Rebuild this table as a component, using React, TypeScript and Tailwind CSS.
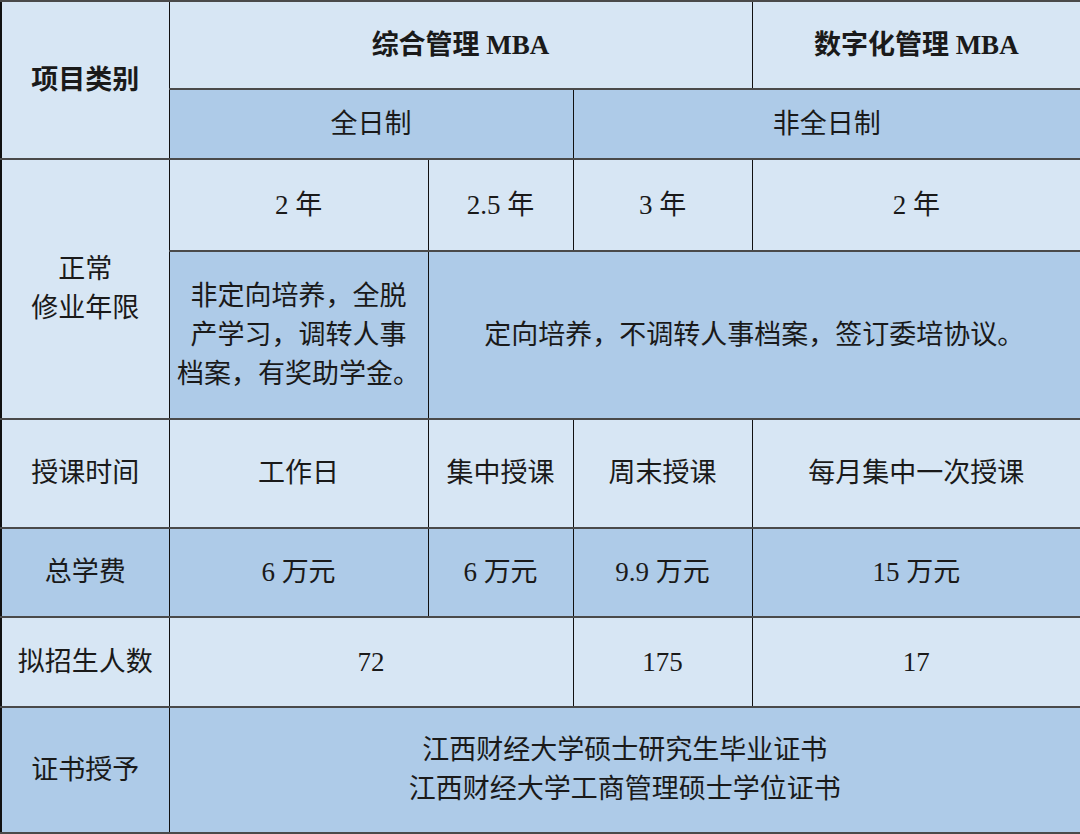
const light = 'bg-[#d7e6f4]';
const dark = 'bg-[#aecbe8]';

function Cell({
  children, bg, colSpan, rowSpan, bold, className = '',
}: {
  children: React.ReactNode; bg: string; colSpan?: number; rowSpan?: number; bold?: boolean; className?: string;
}) {
  return (
    <td
      colSpan={colSpan}
      rowSpan={rowSpan}
      className={`${bg} border-x border-x-[#111] border-y-2 border-y-[#4a4a4a] text-center align-middle p-0 ${bold ? 'font-bold' : ''} ${className}`}
    >
      {children}
    </td>
  );
}

export default function App() {
  return (
    <div
      className="w-[1080px] h-[834px] bg-[#f2f2f2] text-[#1a1a1a] text-[27px] leading-[39px]"
      style={{ fontFamily: '"Liberation Serif", "Noto Sans CJK SC", serif' }}
    >
      <table className="w-[1080px] table-fixed border-collapse border-2 border-[#111]">
        <colgroup>
          <col className="w-[168px]" />
          <col className="w-[259px]" />
          <col className="w-[145px]" />
          <col className="w-[179px]" />
          <col className="w-[329px]" />
        </colgroup>
        <tbody>
          <tr className="h-[88px]">
            <Cell bg={light} rowSpan={2} bold>项目类别</Cell>
            <Cell bg={light} colSpan={3} bold>综合管理 MBA</Cell>
            <Cell bg={light} bold>数字化管理 MBA</Cell>
          </tr>
          <tr className="h-[70px]">
            <Cell bg={dark} colSpan={2}>全日制</Cell>
            <Cell bg={dark} colSpan={2}>非全日制</Cell>
          </tr>
          <tr className="h-[92px]">
            <Cell bg={light} rowSpan={2}>正常<br />修业年限</Cell>
            <Cell bg={light}>2 年</Cell>
            <Cell bg={light}>2.5 年</Cell>
            <Cell bg={light}>3 年</Cell>
            <Cell bg={light}>2 年</Cell>
          </tr>
          <tr className="h-[168px]">
            <Cell bg={dark}>
              非定向培养，全脱<br />产学习，调转人事<br />档案，有奖助学金。
            </Cell>
            <Cell bg={dark} colSpan={3}>定向培养，不调转人事档案，签订委培协议。</Cell>
          </tr>
          <tr className="h-[109px]">
            <Cell bg={light}>授课时间</Cell>
            <Cell bg={light}>工作日</Cell>
            <Cell bg={light}>集中授课</Cell>
            <Cell bg={light}>周末授课</Cell>
            <Cell bg={light}>每月集中一次授课</Cell>
          </tr>
          <tr className="h-[89px]">
            <Cell bg={dark}>总学费</Cell>
            <Cell bg={dark}>6 万元</Cell>
            <Cell bg={dark}>6 万元</Cell>
            <Cell bg={dark}>9.9 万元</Cell>
            <Cell bg={dark}>15 万元</Cell>
          </tr>
          <tr className="h-[90px]">
            <Cell bg={light}>拟招生人数</Cell>
            <Cell bg={light} colSpan={2}>72</Cell>
            <Cell bg={light}>175</Cell>
            <Cell bg={light}>17</Cell>
          </tr>
          <tr className="h-[126px]">
            <Cell bg={dark}>证书授予</Cell>
            <Cell bg={dark} colSpan={4}>
              江西财经大学硕士研究生毕业证书<br />江西财经大学工商管理硕士学位证书
            </Cell>
          </tr>
        </tbody>
      </table>
    </div>
  );
}
